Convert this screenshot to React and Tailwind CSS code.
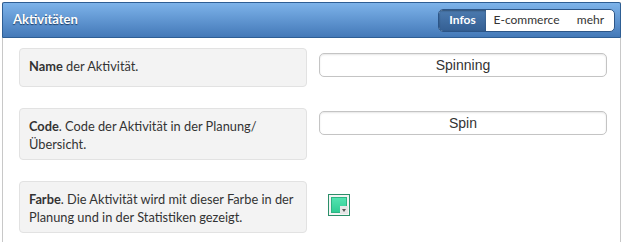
import React from "react";

const rows = [
  {
    label: "Name",
    text: " der Aktivität.",
    kind: "input",
    value: "Spinning",
    offset: "mt-[5px]",
  },
  {
    label: "Code",
    text: ". Code der Aktivität in der Planung/ Übersicht.",
    kind: "input",
    value: "Spin",
    offset: "mt-[3px]",
  },
  {
    label: "Farbe",
    text: ". Die Aktivität wird mit dieser Farbe in der Planung und in der Statistiken gezeigt.",
    kind: "color",
    offset: "mt-[13px]",
  },
];

function ColorSwatch() {
  return (
    <div className="relative ml-[9px] h-[22px] w-[22px] border border-[#2b8f69] bg-[#f4f4f4] p-[2px]">
      <div className="h-full w-full border border-[#2fb383] bg-gradient-to-b from-[#52e3b0] to-[#30cc94]" />
      <div className="absolute bottom-[1px] right-[1px] flex h-[8px] w-[8px] items-center justify-center bg-[#e6e6e6]">
        <div className="h-0 w-0 border-x-[2px] border-t-[3px] border-x-transparent border-t-[#555]" />
      </div>
    </div>
  );
}

export default function App() {
  return (
    <div className="h-[242px] w-[626px] bg-white pl-[2px] pt-[2px] font-['Lato',sans-serif]">
      <div className="h-[240px] w-[619px] border-x border-[#c8c8c8]">
        {/* Header */}
        <div className="-mx-px flex h-[36px] items-center justify-between rounded-t-[2px] border border-[#2e5e94] bg-gradient-to-b from-[#7db3ea] to-[#4479b8] pl-[10px] pr-[5px]">
          <h1 className="text-[13px] font-bold text-white [text-shadow:0_1px_1px_#1d3d66]">
            Aktivitäten
          </h1>
          <div className="flex h-[23px] overflow-hidden rounded-[5px] border border-[#2c5587] bg-white text-[12px]">
            <div className="flex w-[47px] items-center justify-center bg-gradient-to-b from-[#4c7bb0] to-[#345f93] font-bold text-white shadow-[inset_0_1px_2px_rgba(0,0,0,0.35)]">
              Infos
            </div>
            <div className="flex w-[81px] items-center justify-center text-[#333]">E-commerce</div>
            <div className="flex w-[47px] items-center justify-center text-[#333]">mehr</div>
          </div>
        </div>

        {/* Body */}
        <div className="flex flex-col gap-[21px] pl-[16px] pr-[13px] pt-[10px]">
          {rows.map((row) => (
            <div key={row.label} className="flex items-start">
              <div className="min-h-[39px] w-[288px] shrink-0 rounded-[4px] border border-[#e2e2e2] bg-[#f3f3f3] pb-[6px] pl-[9px] pr-[6px] pt-[8px] text-[12.8px] leading-[18px] text-[#333]">
                <span className="font-bold">{row.label}</span>
                {row.text}
              </div>
              <div className={`ml-[12px] flex-1 ${row.offset}`}>
                {row.kind === "input" ? (
                  <div className="flex h-[24px] w-[288px] items-center justify-center rounded-[5px] border border-[#c4c4c4] bg-white font-['Liberation_Sans',sans-serif] text-[14px] text-[#333] shadow-[inset_0_1px_2px_rgba(0,0,0,0.1)]">
                    {row.value}
                  </div>
                ) : (
                  <ColorSwatch />
                )}
              </div>
            </div>
          ))}
        </div>
      </div>
    </div>
  );
}
